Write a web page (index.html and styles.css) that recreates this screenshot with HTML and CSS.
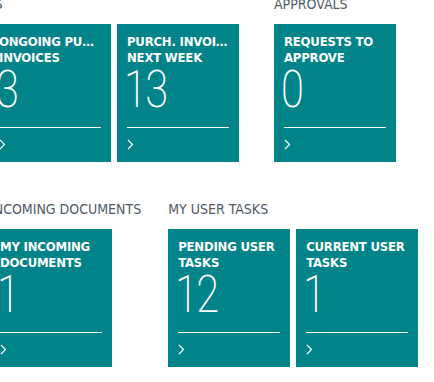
FILE: index.html
```html
<!DOCTYPE html>
<html>
  <head>
    <meta charset="utf-8">
    <title>Activities</title>
    <link rel="stylesheet" href="styles.css">
  </head>
  <body>
    <div class="cues">
      <div class="cue-row">
        <div class="cue-group">
          <h3>Ongoing Purchases</h3>
          <div class="tiles">
            <a class="tile">
              <p class="caption"><span>Purchase Orders</span><span>Open</span></p>
              <p class="count"><span>4</span></p>
              <p class="more"><svg width="7" height="11" viewBox="0 0 7 11"><polyline points="1,1 5.5,5.5 1,10" /></svg></p>
            </a>
            <a class="tile">
              <p class="caption"><span>Ongoing Purchase</span><span>Invoices</span></p>
              <p class="count"><span>3</span></p>
              <p class="more"><svg width="7" height="11" viewBox="0 0 7 11"><polyline points="1,1 5.5,5.5 1,10" /></svg></p>
            </a>
            <a class="tile">
              <p class="caption"><span>Purch. Invoices Due</span><span>Next Week</span></p>
              <p class="count"><span>13</span></p>
              <p class="more"><svg width="7" height="11" viewBox="0 0 7 11"><polyline points="1,1 5.5,5.5 1,10" /></svg></p>
            </a>
          </div>
        </div>
        <div class="cue-group">
          <h3>Approvals</h3>
          <div class="tiles">
            <a class="tile">
              <p class="caption"><span>Requests to</span><span>Approve</span></p>
              <p class="count"><span>0</span></p>
              <p class="more"><svg width="7" height="11" viewBox="0 0 7 11"><polyline points="1,1 5.5,5.5 1,10" /></svg></p>
            </a>
          </div>
        </div>
      </div>
      <div class="cue-row second">
        <div class="cue-group">
          <h3>Incoming Documents</h3>
          <div class="tiles">
            <a class="tile">
              <p class="caption"><span>My Incoming</span><span>Documents</span></p>
              <p class="count"><span>1</span></p>
              <p class="more"><svg width="7" height="11" viewBox="0 0 7 11"><polyline points="1,1 5.5,5.5 1,10" /></svg></p>
            </a>
          </div>
        </div>
        <div class="cue-group">
          <h3>My User Tasks</h3>
          <div class="tiles">
            <a class="tile">
              <p class="caption"><span>Pending User</span><span>Tasks</span></p>
              <p class="count"><span>12</span></p>
              <p class="more"><svg width="7" height="11" viewBox="0 0 7 11"><polyline points="1,1 5.5,5.5 1,10" /></svg></p>
            </a>
            <a class="tile">
              <p class="caption"><span>Current User</span><span>Tasks</span></p>
              <p class="count"><span>1</span></p>
              <p class="more"><svg width="7" height="11" viewBox="0 0 7 11"><polyline points="1,1 5.5,5.5 1,10" /></svg></p>
            </a>
          </div>
        </div>
      </div>
    </div>
  </body>
</html>
```

FILE: styles.css
```css
body {
  margin: 0;
  background-color: #fff;
  overflow: hidden;
  font-family: "DejaVu Sans Condensed", "DejaVu Sans", sans-serif;
}

p, h3 {
  margin: 0;
  padding: 0;
}

.cues {
  margin-top: -6px;
}

.cue-row {
  display: flex;
  align-items: flex-start;
  margin-left: -139px;
}

.cue-row.second {
  margin-left: -10px;
  margin-top: 37px;
}

.cue-group {
  margin-right: 29px;
}

.cue-row.second .cue-group {
  margin-right: 27px;
}

h3 {
  font-size: 14px;
  line-height: 20px;
  font-weight: normal;
  text-transform: uppercase;
  color: #505a64;
  white-space: nowrap;
  margin-bottom: 10px;
}

.tiles {
  display: flex;
}

.tile {
  display: block;
  width: 122px;
  height: 138px;
  box-sizing: border-box;
  margin-right: 6px;
  padding: 10px 10px 0 10px;
  background-color: #00848a;
  color: #fff;
}

.caption {
  font-size: 13px;
  line-height: 16px;
  font-weight: bold;
  text-transform: uppercase;
  letter-spacing: -0.2px;
}

.caption span {
  display: block;
  white-space: nowrap;
  overflow: hidden;
  text-overflow: ellipsis;
}

.count {
  font-family: Roboto, "Liberation Sans", sans-serif;
  font-weight: 200;
  font-size: 52px;
  line-height: 48px;
  height: 48px;
  padding-bottom: 13px;
  border-bottom: 1px solid #fff;
}

.count span {
  display: inline-block;
  letter-spacing: -2px;
  margin-left: -3px;
  transform: scaleX(0.8);
  transform-origin: left center;
}

.more {
  margin-top: 11px;
  height: 11px;
}

.more svg {
  display: block;
}

.more svg polyline {
  fill: none;
  stroke: #fff;
  stroke-width: 1.2;
}
```
